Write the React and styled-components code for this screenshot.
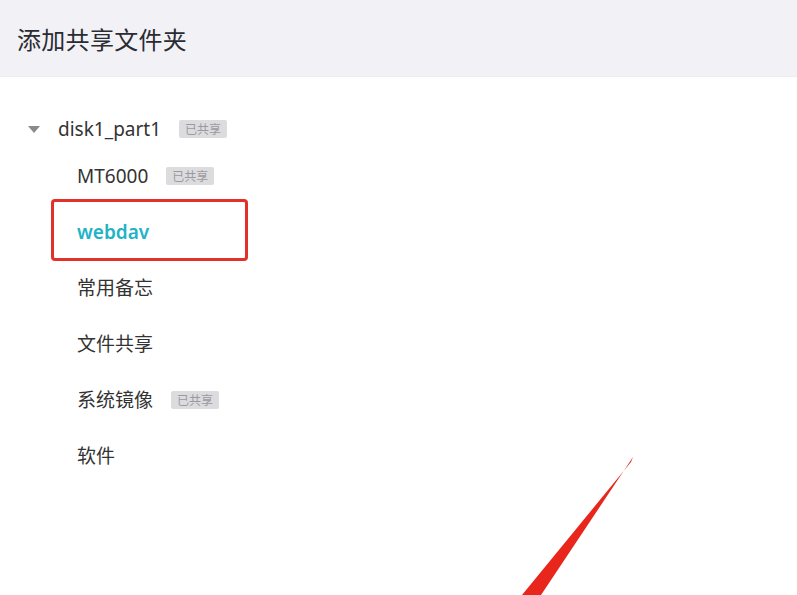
import React from 'react';
import styled, { createGlobalStyle } from 'styled-components';

const GlobalStyle = createGlobalStyle`
  html, body {
    margin: 0;
    padding: 0;
    background: #ffffff;
  }
  body {
    font-family: "Noto Sans", "Noto Sans CJK SC", sans-serif;
    color: #333333;
  }
`;

const Page = styled.div`
  position: relative;
  width: 797px;
  height: 595px;
  overflow: hidden;
  background: #ffffff;
`;

const Header = styled.header`
  height: 77px;
  display: flex;
  align-items: center;
  padding-left: 17px;
  background: #f2f2f6;
  border-bottom: 1px solid #ececf0;
  box-sizing: border-box;
`;

const Title = styled.h1`
  margin: 0;
  font-size: 24px;
  font-weight: 400;
  color: #2b2b33;
  letter-spacing: 0.3px;
`;

const Tree = styled.ul`
  list-style: none;
  margin: 0;
  padding: 33px 0 0 0;
`;

const Row = styled.li`
  position: relative;
  display: flex;
  align-items: center;
  gap: 18px;
  height: ${(p) => (p.$root ? '38px' : '56px')};
  padding-left: ${(p) => (p.$root ? '28px' : '77px')};
  font-size: 19px;
  color: ${(p) => (p.$active ? '#22b2c8' : '#333333')};
  font-weight: ${(p) => (p.$active ? 600 : 400)};

  ${(p) =>
    p.$marked &&
    `
    &::after {
      content: '';
      position: absolute;
      left: 51px;
      top: -5px;
      width: 197px;
      height: 62px;
      box-sizing: border-box;
      border: 3px solid #e2302a;
      border-radius: 4px;
    }
  `}
`;

const Caret = styled.span`
  width: 0;
  height: 0;
  border-left: 6px solid transparent;
  border-right: 6px solid transparent;
  border-top: 7px solid #8a8a8a;
`;

const Label = styled.span`
  line-height: 1;
`;

const Badge = styled.span`
  display: inline-flex;
  align-items: center;
  height: 18px;
  padding: 0 6px;
  border-radius: 2px;
  background: #dcdcdf;
  color: #9a9a9e;
  font-size: 12px;
  font-weight: 400;
`;

const Stroke = styled.svg`
  position: absolute;
  left: 0;
  top: 0;
  pointer-events: none;
`;

const folders = [
  { name: 'MT6000', shared: true },
  { name: 'webdav', active: true },
  { name: '常用备忘' },
  { name: '文件共享' },
  { name: '系统镜像', shared: true },
  { name: '软件' },
];

export default function App() {
  return (
    <Page>
      <GlobalStyle />
      <Header>
        <Title>添加共享文件夹</Title>
      </Header>
      <Tree>
        <Row $root>
          <Caret />
          <Label>disk1_part1</Label>
          <Badge>已共享</Badge>
        </Row>
        {folders.map((f) => (
          <Row key={f.name} $active={f.active} $marked={f.active}>
            <Label>{f.name}</Label>
            {f.shared && <Badge>已共享</Badge>}
          </Row>
        ))}
      </Tree>
      <Stroke width="797" height="595" viewBox="0 0 797 595">
        <polygon points="633,457 631,462 522,595 541,595" fill="#e8261c" />
      </Stroke>
    </Page>
  );
}
